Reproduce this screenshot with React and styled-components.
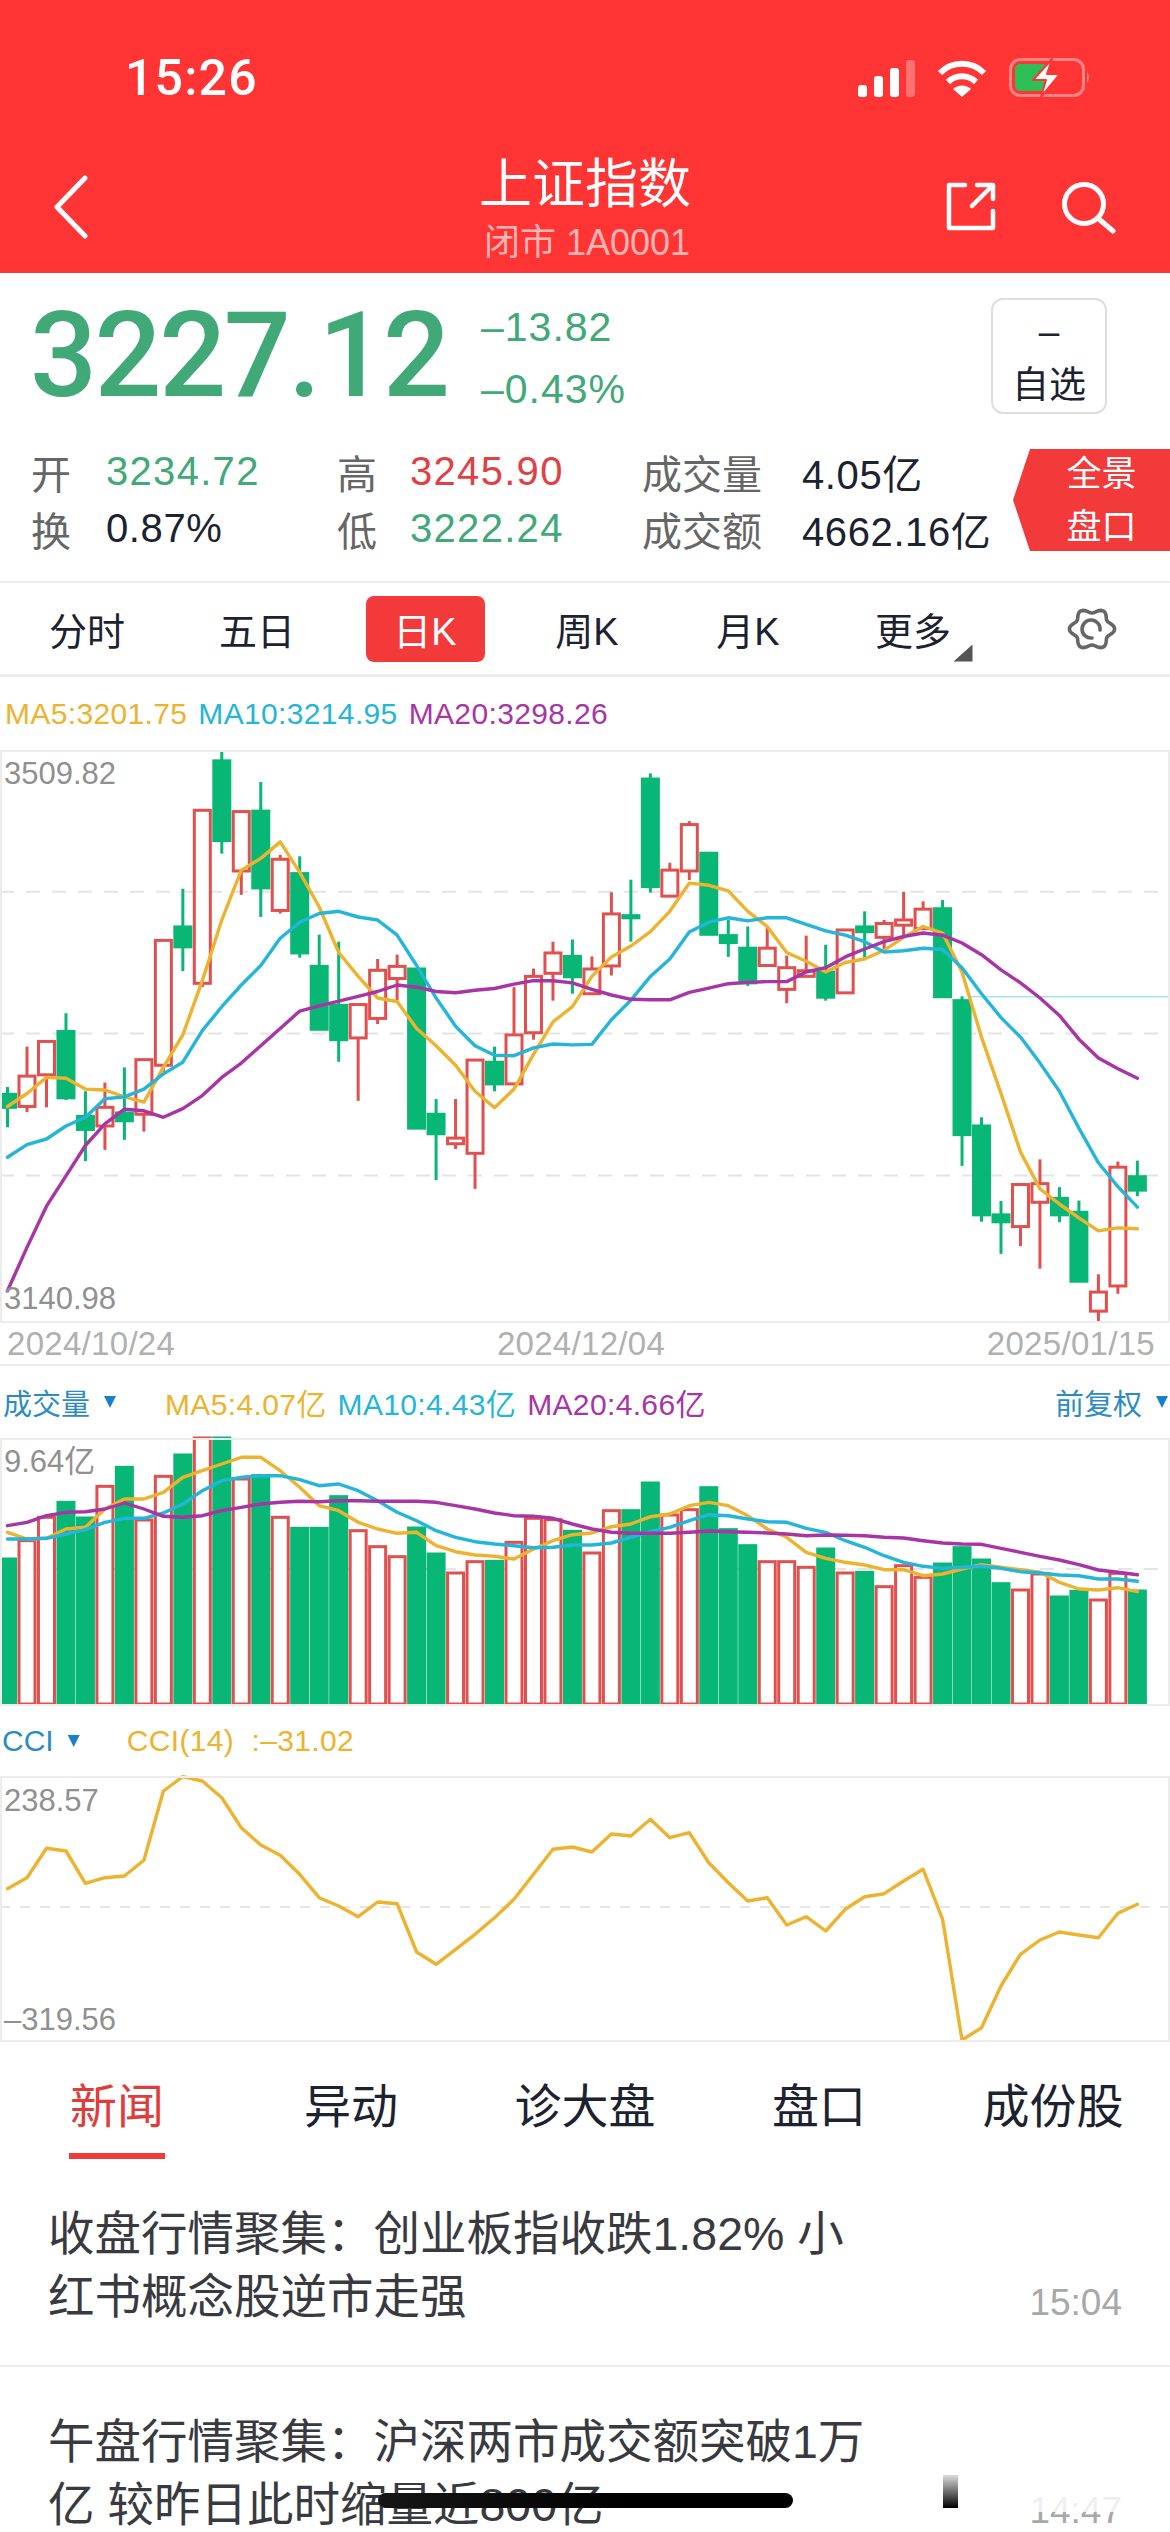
import React from 'react'
import styled, { createGlobalStyle } from 'styled-components'

const GlobalStyle = createGlobalStyle`
  html, body {
    margin: 0;
    padding: 0;
    background: #fff;
  }
  * {
    box-sizing: border-box;
  }
`

const RED = '#ff3535'
const GREEN_TEXT = '#41a877'
const UP = '#e0504f'
const DOWN = '#08b775'
const YELLOW = '#edb22e'
const CYAN = '#24b5da'
const PURPLE = '#a835a5'
const LINE = '#ececec'

const Screen = styled.div`
  position: relative;
  width: 1170px;
  height: 2532px;
  overflow: hidden;
  background: #fff;
  font-family: 'Liberation Sans', 'Noto Sans CJK SC', sans-serif;
  color: #1c2230;
`

/* red header */
const Header = styled.header`
  height: 273px;
  background: ${RED};
  color: #fff;
`

const StatusBar = styled.div`
  display: flex;
  align-items: center;
  height: 132px;
  padding: 24px 79px 0 125px;
`

const Clock = styled.div`
  font-family: Roboto, 'Liberation Sans', sans-serif;
  font-size: 50px;
  font-weight: 500;
  letter-spacing: 1.2px;
  line-height: 60px;
`

const StatusIcons = styled.div`
  display: flex;
  align-items: center;
  gap: 22px;
  margin-left: auto;
`

const NavBar = styled.div`
  display: grid;
  grid-template-columns: 1fr auto 1fr;
  height: 141px;
  padding: 0 54px;
`

const NavLeft = styled.div`
  display: flex;
  align-items: flex-start;
  padding-top: 43px;
`

const NavRight = styled.div`
  display: flex;
  justify-content: flex-end;
  align-items: flex-start;
  gap: 66px;
  padding-top: 50px;
`

const TitleBlock = styled.div`
  display: flex;
  flex-direction: column;
  align-items: center;
  padding-top: 24px;
`

const Title = styled.div`
  font-size: 53px;
  line-height: 58px;
`

const SubTitle = styled.div`
  margin-top: 11px;
  padding-left: 4px;
  font-size: 36px;
  line-height: 36px;
  color: #ffb4b4;
`

/* quote block */
const Quote = styled.section`
  height: 310px;
  padding-top: 25px;
  border-bottom: 2px solid ${LINE};
`

const PriceRow = styled.div`
  display: flex;
  align-items: center;
  height: 116px;
  padding: 0 63px 0 30px;
`

const Price = styled.div`
  width: 451px;
  font-family: Roboto, 'Liberation Sans', sans-serif;
  font-size: 118px;
  font-weight: 500;
  line-height: 116px;
  letter-spacing: -2.5px;
  color: ${GREEN_TEXT};
`

const Change = styled.div`
  padding-top: 4px;
  font-size: 41px;
  letter-spacing: 1px;
  line-height: 62px;
  color: ${GREEN_TEXT};
`

const WatchButton = styled.div`
  display: flex;
  flex-direction: column;
  align-items: center;
  gap: 8px;
  width: 116px;
  height: 116px;
  margin-left: auto;
  padding-top: 9px;
  border: 2px solid #dedede;
  border-radius: 12px;
  font-size: 37px;
  line-height: 46px;
`

const StatsRow = styled.div`
  display: flex;
  align-items: center;
  margin-top: 29px;
  padding-left: 31px;
`

const StatsGrid = styled.div`
  display: grid;
  grid-template-columns: 75px 231px 73px 232px 160px 211px;
  grid-auto-rows: 57px;
  align-items: center;
`

const StatLabel = styled.span`
  font-size: 40px;
  color: #666;
  white-space: nowrap;
`

const StatValue = styled.span`
  font-size: 40px;
  letter-spacing: ${p => (p.$color ? '1.3px' : '0.6px')};
  color: ${p => p.$color || '#1c2230'};
  white-space: nowrap;
`

const PanoramaTag = styled.div`
  display: flex;
  flex-direction: column;
  align-items: center;
  justify-content: center;
  width: 157px;
  height: 102px;
  padding-left: 20px;
  background: #f23a3a;
  color: #fff;
  font-size: 35px;
  line-height: 53px;
  clip-path: polygon(17px 0, 100% 0, 100% 100%, 17px 100%, 0 50%);
`

/* period switch */
const PeriodBar = styled.nav`
  display: grid;
  grid-template-columns: 170px 170px 166px 158px 164px 166px 1fr;
  align-items: center;
  height: 94px;
  padding-left: 2px;
  border-bottom: 3px solid ${LINE};
  font-size: 38px;
`

const Period = styled.div`
  display: flex;
  justify-content: center;
`

const PeriodLabel = styled.span`
  position: relative;
  display: flex;
  align-items: center;
  justify-content: center;
  width: 119px;
  height: 66px;
  border-radius: 8px;
  background: ${p => (p.$active ? '#f23a3a' : 'transparent')};
  color: ${p => (p.$active ? '#fff' : '#1c2230')};
`

const MoreCorner = styled.i`
  position: absolute;
  right: 0;
  bottom: 0;
  width: 19px;
  height: 17px;
  background: #555;
  clip-path: polygon(100% 0, 100% 100%, 0 100%);
`

const GearCell = styled.div`
  display: flex;
  justify-content: flex-end;
  padding-right: 53px;
`

/* chart panels */
const Legend = styled.div`
  display: flex;
  align-items: center;
  gap: 11px;
  height: ${p => p.$height}px;
  padding: 0 2px 0 ${p => p.$pad}px;
  font-size: 30px;
  letter-spacing: 0.35px;
  white-space: nowrap;
`

const LegendItem = styled.span`
  margin-left: ${p => p.$offset || 0}px;
  color: ${p => p.$color};
  white-space: pre;
`

const IndicatorName = styled.span`
  display: flex;
  align-items: center;
  gap: 14px;
  color: #2b8cc4;
  font-size: ${p => p.$size || 29}px;
  letter-spacing: 0;
`

const Caret = styled.i`
  width: 12px;
  height: 12px;
  background: #1a80cc;
  clip-path: polygon(0 0, 100% 0, 50% 100%);
`

const Spacer = styled.div`
  flex: 1;
`

const Plot = styled.div`
  position: relative;
  height: ${p => p.$height}px;

  svg {
    display: block;
    overflow: visible;
  }

  &::after {
    content: '';
    position: absolute;
    inset: 0;
    border: 2px solid ${LINE};
    pointer-events: none;
  }
`

const AxisLabel = styled.span`
  position: absolute;
  left: 4px;
  top: ${p => p.$top}px;
  font-size: 31px;
  line-height: 30px;
  color: #909090;
`

const DateRow = styled.div`
  display: flex;
  align-items: center;
  justify-content: space-between;
  height: 43px;
  padding: 0 15px 0 7px;
  border-bottom: 2px solid ${LINE};
  font-size: 33px;
  letter-spacing: 0.3px;
  color: #b0b0b0;
`

/* news */
const NewsTabs = styled.nav`
  display: grid;
  grid-template-columns: repeat(5, 1fr);
  height: 117px;
  padding-top: 35px;
`

const NewsTab = styled.div`
  display: flex;
  flex-direction: column;
  align-items: center;
  font-size: 47px;
  line-height: 60px;
  color: ${p => (p.$active ? '#e03c3c' : '#1c2230')};

  &::after {
    content: '';
    width: 96px;
    height: 6px;
    margin-top: 16px;
    background: ${p => (p.$active ? '#ef3b3b' : 'transparent')};
  }
`

const NewsItem = styled.article`
  display: flex;
  justify-content: space-between;
  padding: 44px 48px 36px 48px;
  border-bottom: 2px solid ${LINE};
`

const Headline = styled.div`
  font-size: 46.5px;
  line-height: 63px;
  color: #383a40;
  white-space: nowrap;
`

const NewsTime = styled.div`
  align-self: flex-end;
  margin-bottom: 6px;
  font-size: 37px;
  line-height: 40px;
  color: #a8a8a8;
`

const Smudge = styled.div`
  position: absolute;
  left: 863px;
  top: 2472px;
  width: 282px;
  height: 40px;
  background: rgba(255, 255, 255, 0.82);
`

const SmudgeBar = styled.div`
  position: absolute;
  left: 943px;
  top: 2475px;
  width: 15px;
  height: 33px;
  background: linear-gradient(#dcdcdc, #000);
`

const HomeBar = styled.div`
  position: absolute;
  left: 378px;
  top: 2493px;
  width: 415px;
  height: 15px;
  border-radius: 8px;
  background: linear-gradient(90deg, #161616, #000 60%);
`

/* candles: [wick top, body top, body bottom, wick bottom, 1 = up day], plot units */
const candles = [
  [915, 932, 962, 1008, 0], [822, 890, 960, 973, 1], [810, 810, 887, 962, 1], [745, 787, 940, 945, 0],
  [925, 983, 1013, 1086, 0], [905, 962, 1005, 1060, 1], [870, 975, 993, 1037, 0], [852, 852, 978, 1018, 1],
  [577, 577, 865, 880, 1], [458, 546, 592, 648, 0], [277, 277, 676, 685, 1], [142, 163, 347, 377, 0],
  [280, 280, 417, 472, 1], [212, 279, 456, 523, 0], [380, 390, 508, 515, 1], [383, 423, 606, 617, 0],
  [564, 637, 782, 782, 0], [580, 727, 806, 857, 0], [725, 725, 802, 947, 1], [620, 646, 757, 770, 1],
  [610, 637, 665, 715, 1], [643, 643, 1010, 1010, 0], [943, 978, 1023, 1130, 0], [943, 1033, 1046, 1058, 1],
  [853, 853, 1068, 1150, 1], [822, 858, 908, 925, 0], [685, 795, 908, 910, 1], [642, 660, 790, 806, 1],
  [580, 606, 653, 716, 1], [575, 614, 661, 700, 0], [614, 643, 700, 700, 1], [466, 516, 636, 658, 1],
  [437, 520, 525, 580, 0], [192, 205, 453, 467, 0], [398, 415, 475, 475, 1], [302, 310, 417, 438, 1],
  [376, 376, 563, 563, 0], [530, 566, 582, 615, 0], [545, 595, 675, 682, 0], [545, 595, 635, 635, 1],
  [612, 640, 690, 722, 1], [566, 647, 660, 662, 1], [587, 650, 708, 716, 0], [552, 553, 698, 700, 1],
  [510, 546, 557, 622, 0], [530, 538, 570, 600, 1], [465, 530, 542, 570, 1], [487, 505, 550, 550, 1],
  [484, 504, 707, 707, 0], [706, 716, 1025, 1097, 0], [985, 1005, 1210, 1226, 0], [1178, 1210, 1226, 1300, 0],
  [1140, 1140, 1237, 1282, 1], [1082, 1138, 1181, 1334, 1], [1146, 1172, 1210, 1227, 0], [1177, 1204, 1363, 1363, 0],
  [1347, 1388, 1432, 1456, 1], [1087, 1100, 1374, 1392, 1], [1085, 1122, 1153, 1167, 0],
]

const priceMa5 = [
  960, 930, 893, 895, 920, 922, 938, 950, 870, 795, 670, 530, 415, 388, 350, 420, 500, 605, 660, 710,
  718, 780, 820, 865, 925, 963, 920, 840, 765, 730, 660, 615, 590, 557, 510, 445, 450, 463, 510, 545,
  605, 625, 650, 628, 620, 600, 570, 545, 560, 650, 800, 930, 1065, 1150, 1185, 1217, 1247, 1240, 1242,
]

const priceMa10 = [
  1077, 1048, 1035, 1005, 985, 942, 938, 920, 885, 858, 785, 730, 680, 635, 572, 535, 515, 510, 523, 530,
  565, 635, 710, 775, 820, 842, 843, 825, 816, 818, 817, 760, 715, 660, 620, 558, 535, 525, 532, 525,
  525, 540, 555, 565, 580, 604, 601, 595, 598, 640, 700, 755, 800, 860, 925, 1010, 1090, 1145, 1192,
]

const priceMa20 = [
  1385, 1285, 1190, 1120, 1050, 1000, 966, 970, 985, 965, 935, 893, 860, 820, 780, 740, 728, 717, 706, 695,
  680, 685, 695, 698, 692, 688, 678, 670, 670, 675, 690, 703, 713, 714, 714, 697, 687, 677, 674, 672,
  672, 650, 640, 615, 597, 580, 568, 560, 565, 583, 610, 645, 675, 710, 750, 805, 848, 873, 895,
]

const volumes = [
  [600, 0], [545, 1], [475, 1], [430, 0], [477, 0], [382, 1], [325, 0], [483, 1], [352, 1], [288, 0],
  [237, 1], [237, 0], [360, 1], [350, 0], [475, 1], [508, 0], [508, 0], [413, 0], [515, 1], [563, 1],
  [593, 1], [507, 0], [585, 0], [642, 1], [608, 1], [607, 0], [550, 1], [478, 1], [482, 1], [517, 0],
  [582, 1], [455, 1], [455, 0], [372, 0], [468, 1], [452, 1], [386, 0], [512, 0], [560, 0], [608, 1],
  [608, 1], [625, 1], [570, 0], [642, 1], [640, 0], [683, 1], [620, 1], [655, 1], [615, 0], [566, 0],
  [603, 0], [674, 0], [693, 1], [645, 1], [714, 0], [697, 0], [723, 1], [643, 1], [696, 0],
]

const volumeMa5 = [
  520, 540, 538, 510, 505, 450, 420, 420, 400, 355, 335, 315, 295, 295, 335, 385, 440, 455, 490, 510,
  523, 520, 560, 578, 588, 592, 600, 570, 545, 527, 522, 503, 495, 473, 465, 440, 430, 440, 470, 510,
  535, 580, 598, 610, 618, 632, 632, 650, 645, 630, 617, 625, 632, 640, 670, 690, 693, 686, 698,
]

const volumeMa10 = [
  540, 540, 538, 525, 512, 490, 478, 478, 462, 435, 395, 365, 355, 350, 350, 362, 380, 375, 395, 425,
  460, 485, 515, 535, 548, 555, 560, 566, 565, 558, 558, 552, 535, 518, 505, 485, 467, 470, 480, 488,
  490, 508, 520, 545, 565, 590, 610, 622, 628, 625, 622, 628, 638, 642, 648, 650, 660, 660, 667,
]

const volumeMa20 = [
  500, 490, 470, 460, 458, 450, 432, 450, 472, 475, 470, 455, 445, 435, 430, 427, 428, 425, 425, 427,
  427, 427, 430, 440, 450, 462, 470, 472, 478, 495, 510, 520, 523, 523, 523, 520, 516, 518, 520, 522,
  525, 530, 528, 529, 530, 535, 537, 545, 552, 555, 556, 568, 580, 592, 603, 617, 633, 640, 647,
]

const cci = [
  568, 535, 447, 455, 552, 535, 530, 483, 275, 232, 245, 295, 385, 437, 468, 525, 595, 620, 652, 608,
  613, 758, 795, 750, 705, 655, 600, 525, 450, 443, 458, 404, 410, 360, 415, 400, 490, 550, 605, 595,
  677, 652, 695, 630, 592, 583, 545, 510, 660, 1022, 985, 860, 765, 722, 698, 707, 715, 642, 615,
]

const slotX = i => 7.52 + i * 19.48
const bodyWidth = 16

const points = (series, toY) => series.map((v, i) => `${slotX(i).toFixed(1)},${toY(v).toFixed(1)}`).join(' ')

function Series({ data, toY, color, width = 3.4 }) {
  return (
    <polyline
      points={points(data, toY)}
      fill="none"
      stroke={color}
      strokeWidth={width}
      strokeLinejoin="round"
      strokeLinecap="round"
    />
  )
}

function GridLine({ y }) {
  return <line x1="0" x2="1170" y1={y} y2={y} stroke="#e4e4e4" strokeWidth="2" strokeDasharray="14 12" />
}

function PriceChart() {
  const toY = v => (v - 138) / 2.306
  return (
    <svg width="1170" height="573" viewBox="0 0 1170 573">
      <GridLine y={toY(465)} />
      <GridLine y={toY(792)} />
      <GridLine y={toY(1119)} />
      <line x1="971" x2="1170" y1={toY(707)} y2={toY(707)} stroke="#a4e4f2" strokeWidth="1.5" />
      {candles.map(([high, top, bottom, low, up], i) => {
        const x = slotX(i)
        const color = up ? UP : DOWN
        return (
          <g key={i}>
            <line x1={x} x2={x} y1={toY(high)} y2={toY(low)} stroke={color} strokeWidth="3" />
            <rect
              x={x - bodyWidth / 2}
              y={toY(top)}
              width={bodyWidth}
              height={toY(bottom) - toY(top)}
              fill={up ? '#fff' : color}
              stroke={color}
              strokeWidth="3"
            />
          </g>
        )
      })}
      <Series data={priceMa5} toY={toY} color={YELLOW} />
      <Series data={priceMa10} toY={toY} color={CYAN} />
      <Series data={priceMa20} toY={toY} color={PURPLE} />
    </svg>
  )
}

function VolumeChart() {
  const toY = v => (v - 237) / 3
  return (
    <svg width="1170" height="266" viewBox="0 0 1170 266">
      <GridLine y={toY(630)} />
      {volumes.map(([top, up], i) => {
        const color = up ? UP : DOWN
        return (
          <rect
            key={i}
            x={slotX(i) - bodyWidth / 2}
            y={toY(top)}
            width={bodyWidth}
            height={266 - toY(top)}
            fill={up ? '#fff' : color}
            stroke={color}
            strokeWidth="3"
          />
        )
      })}
      <Series data={volumeMa5} toY={toY} color={YELLOW} />
      <Series data={volumeMa10} toY={toY} color={CYAN} />
      <Series data={volumeMa20} toY={toY} color={PURPLE} />
    </svg>
  )
}

function CciChart() {
  const toY = v => (v - 230) / 3
  return (
    <svg width="1170" height="266" viewBox="0 0 1170 266">
      <line x1="0" x2="1170" y1="131" y2="131" stroke="#dedede" strokeWidth="1.5" strokeDasharray="10 10" />
      <Series data={cci} toY={toY} color={YELLOW} />
    </svg>
  )
}

function SignalIcon() {
  return (
    <svg width="57" height="37" viewBox="0 0 57 37">
      <rect x="0" y="25" width="9" height="12" rx="3" fill="#fff" />
      <rect x="16" y="16" width="9" height="21" rx="3" fill="#fff" />
      <rect x="32" y="8" width="9" height="29" rx="3" fill="#fff" />
      <rect x="48" y="0" width="9" height="37" rx="3" fill="#fff" opacity="0.3" />
    </svg>
  )
}

function WifiIcon() {
  return (
    <svg width="50" height="38" viewBox="0 0 50 38" fill="none" stroke="#fff" strokeWidth="6">
      <path d="M3 14 A 31 31 0 0 1 47 14" />
      <path d="M11 23 A 20 20 0 0 1 39 23" />
      <path d="M16 30 L25 38 L34 30 A 13 13 0 0 0 16 30Z" fill="#fff" stroke="none" />
    </svg>
  )
}

function BatteryIcon() {
  return (
    <svg width="82" height="40" viewBox="0 0 82 40">
      <rect x="1.5" y="1.5" width="73" height="36" rx="10" fill="none" stroke="#fff" strokeOpacity="0.4" strokeWidth="3" />
      <rect x="6" y="6" width="32" height="27" rx="5" fill="#2dbe55" />
      <path d="M78 14 Q82 19 78 25Z" fill="#fff" fillOpacity="0.4" />
      <path d="M43 1 L24 22 L37 22 L32 39 L51 16 L38 16Z" fill="#fff" stroke={RED} strokeWidth="2" strokeLinejoin="round" />
    </svg>
  )
}

function BackIcon() {
  return (
    <svg width="34" height="64" viewBox="0 0 34 64" fill="none" stroke="#fff" strokeWidth="5" strokeLinecap="round" strokeLinejoin="round">
      <path d="M31 3 L3 32 L31 61" />
    </svg>
  )
}

function ShareIcon() {
  return (
    <svg width="50" height="49" viewBox="0 0 50 49" fill="none" stroke="#fff" strokeWidth="4.5" strokeLinecap="round" strokeLinejoin="round">
      <path d="M19 3 H3 V46 H47 V29" />
      <path d="M26 24 L46 4" />
      <path d="M31 3 H47 V17" />
    </svg>
  )
}

function SearchIcon() {
  return (
    <svg width="54" height="52" viewBox="0 0 54 52" fill="none" stroke="#fff" strokeWidth="5" strokeLinecap="round">
      <circle cx="22" cy="22" r="19.5" />
      <path d="M38 38 L51 49" />
    </svg>
  )
}

// six soft lobes around a ring with a small gap
function GearIcon() {
  const outline = Array.from({ length: 72 }, (_, i) => {
    const a = (i / 72) * Math.PI * 2
    const r = 20 + 2.6 * Math.cos(6 * a)
    return `${(25 + r * Math.cos(a)).toFixed(1)},${(23 + r * 0.92 * Math.sin(a)).toFixed(1)}`
  }).join(' ')
  return (
    <svg width="50" height="46" viewBox="0 0 50 46" fill="none" stroke="#666" strokeWidth="3.6">
      <polygon points={outline} strokeLinejoin="round" />
      <path d="M33 24 A 9 9 0 1 0 25 32" strokeLinecap="round" />
    </svg>
  )
}

const periods = ['分时', '五日', '日K', '周K', '月K', '更多']
const newsTabs = ['新闻', '异动', '诊大盘', '盘口', '成份股']
const news = [
  { lines: ['收盘行情聚集：创业板指收跌1.82% 小', '红书概念股逆市走强'], time: '15:04' },
  { lines: ['午盘行情聚集：沪深两市成交额突破1万', '亿 较昨日此时缩量近800亿'], time: '14:47' },
]

export default function App() {
  return (
    <Screen>
      <GlobalStyle />
      <Header>
        <StatusBar>
          <Clock>15:26</Clock>
          <StatusIcons>
            <SignalIcon />
            <WifiIcon />
            <BatteryIcon />
          </StatusIcons>
        </StatusBar>
        <NavBar>
          <NavLeft>
            <BackIcon />
          </NavLeft>
          <TitleBlock>
            <Title>上证指数</Title>
            <SubTitle>闭市 1A0001</SubTitle>
          </TitleBlock>
          <NavRight>
            <ShareIcon />
            <SearchIcon />
          </NavRight>
        </NavBar>
      </Header>

      <Quote>
        <PriceRow>
          <Price>3227.12</Price>
          <Change>
            <div>–13.82</div>
            <div>–0.43%</div>
          </Change>
          <WatchButton>
            <span>–</span>
            <span>自选</span>
          </WatchButton>
        </PriceRow>
        <StatsRow>
          <StatsGrid>
            <StatLabel>开</StatLabel>
            <StatValue $color={GREEN_TEXT}>3234.72</StatValue>
            <StatLabel>高</StatLabel>
            <StatValue $color="#e23f45">3245.90</StatValue>
            <StatLabel>成交量</StatLabel>
            <StatValue>4.05亿</StatValue>
            <StatLabel>换</StatLabel>
            <StatValue>0.87%</StatValue>
            <StatLabel>低</StatLabel>
            <StatValue $color={GREEN_TEXT}>3222.24</StatValue>
            <StatLabel>成交额</StatLabel>
            <StatValue>4662.16亿</StatValue>
          </StatsGrid>
          <PanoramaTag>
            <span>全景</span>
            <span>盘口</span>
          </PanoramaTag>
        </StatsRow>
      </Quote>

      <PeriodBar>
        {periods.map(label => (
          <Period key={label}>
            <PeriodLabel $active={label === '日K'}>
              {label}
              {label === '更多' && <MoreCorner />}
            </PeriodLabel>
          </Period>
        ))}
        <GearCell>
          <GearIcon />
        </GearCell>
      </PeriodBar>

      <Legend $height={73} $pad={5}>
        <LegendItem $color={YELLOW}>MA5:3201.75</LegendItem>
        <LegendItem $color={CYAN}>MA10:3214.95</LegendItem>
        <LegendItem $color={PURPLE}>MA20:3298.26</LegendItem>
      </Legend>
      <Plot $height={573}>
        <PriceChart />
        <AxisLabel $top={9}>3509.82</AxisLabel>
        <AxisLabel $top={534}>3140.98</AxisLabel>
      </Plot>
      <DateRow>
        <span>2024/10/24</span>
        <span>2024/12/04</span>
        <span>2025/01/15</span>
      </DateRow>

      <Legend $height={72} $pad={3}>
        <IndicatorName>
          成交量
          <Caret />
        </IndicatorName>
        <LegendItem $color={YELLOW} $offset={38}>MA5:4.07亿</LegendItem>
        <LegendItem $color={CYAN}>MA10:4.43亿</LegendItem>
        <LegendItem $color={PURPLE}>MA20:4.66亿</LegendItem>
        <Spacer />
        <IndicatorName>
          前复权
          <Caret />
        </IndicatorName>
      </Legend>
      <Plot $height={268}>
        <VolumeChart />
        <AxisLabel $top={9}>9.64亿</AxisLabel>
      </Plot>

      <Legend $height={70} $pad={2}>
        <IndicatorName $size={30}>
          CCI
          <Caret />
        </IndicatorName>
        <LegendItem $color={YELLOW} $offset={36}>CCI(14)  :–31.02</LegendItem>
      </Legend>
      <Plot $height={266}>
        <CciChart />
        <AxisLabel $top={10}>238.57</AxisLabel>
        <AxisLabel $top={229}>–319.56</AxisLabel>
      </Plot>

      <NewsTabs>
        {newsTabs.map((label, i) => (
          <NewsTab key={label} $active={i === 0}>{label}</NewsTab>
        ))}
      </NewsTabs>
      {news.map(item => (
        <NewsItem key={item.time}>
          <Headline>
            {item.lines.map(line => (
              <div key={line}>{line}</div>
            ))}
          </Headline>
          <NewsTime>{item.time}</NewsTime>
        </NewsItem>
      ))}

      <Smudge />
      <SmudgeBar />
      <HomeBar />
    </Screen>
  )
}
